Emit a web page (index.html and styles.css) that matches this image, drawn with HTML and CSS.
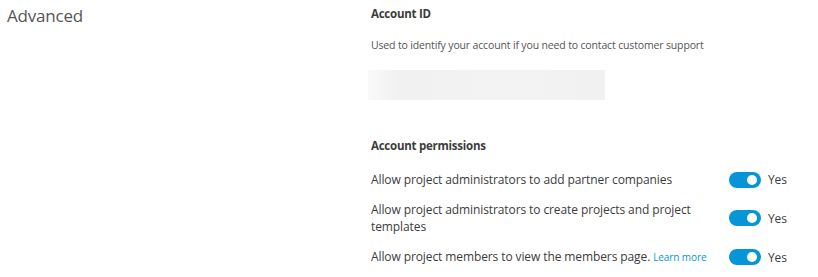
FILE: index.html
```html
<!DOCTYPE html>
<html>

<head>
  <meta name="viewport" content="width=device-width, initial-scale=1.0" />
  <title>Advanced</title>
  <link rel="stylesheet" href="styles.css">
</head>

<body>
  <div class="settings">
    <h1 class="section-title">Advanced</h1>
    <div class="section-body">
      <h2>Account ID</h2>
      <p class="hint">Used to identify your account if you need to contact customer support</p>
      <div class="account-id"></div>

      <h2 class="perm-title">Account permissions</h2>
      <div class="perm-row">
        <span class="perm-label">Allow project administrators to add partner companies</span>
        <span class="toggle on"></span>
        <span class="toggle-text">Yes</span>
      </div>
      <div class="perm-row">
        <span class="perm-label">Allow project administrators to create projects and project templates</span>
        <span class="toggle on"></span>
        <span class="toggle-text">Yes</span>
      </div>
      <div class="perm-row">
        <span class="perm-label">Allow project members to view the members page. <a href="#">Learn more</a></span>
        <span class="toggle on"></span>
        <span class="toggle-text">Yes</span>
      </div>
    </div>
  </div>
</body>

</html>
```

FILE: styles.css
```css
body {
  margin: 0px;
  padding: 0px;
  font-family: "Open Sans", sans-serif;
  color: #3c3c3c;
  background-color: white;
}

.settings {
  display: flex;
}

.section-title {
  width: 371px;
  margin: 0px;
  padding: 4px 0px 0px 7px;
  box-sizing: border-box;
  font-size: 17px;
  font-weight: normal;
  letter-spacing: -0.2px;
  color: #555555;
}

.section-body {
  width: 430px;
}

h2 {
  font-size: 11.5px;
  font-weight: bold;
  line-height: 16px;
  letter-spacing: -0.25px;
  margin: 6px 0px 0px 0px;
  color: #3c3c3c;
}

.hint {
  font-size: 10.5px;
  line-height: 16px;
  letter-spacing: -0.15px;
  margin: 15px 0px 0px 0px;
  color: #555555;
}

.account-id {
  width: 237px;
  height: 30px;
  margin: 17px 0px 0px -3px;
  background: linear-gradient(90deg, #fafafa, #f1f1f1 12%, #f3f3f3 60%, #f1f1f1);
}

.perm-title {
  margin-top: 38px;
  margin-bottom: 17px;
}

.perm-row {
  display: flex;
  align-items: center;
  margin-top: 13px;
  font-size: 12px;
  letter-spacing: -0.1px;
}

.perm-label {
  width: 358px;
  line-height: 17px;
}

.perm-label a {
  color: #0696d7;
  text-decoration: none;
  font-size: 10px;
}

.toggle {
  position: relative;
  width: 32px;
  height: 16px;
  border-radius: 8px;
  background-color: #0696d7;
}

.toggle::after {
  content: "";
  position: absolute;
  top: 3px;
  right: 4px;
  width: 10px;
  height: 10px;
  border-radius: 50%;
  background-color: white;
}

.toggle-text {
  margin-left: 7px;
}
```
